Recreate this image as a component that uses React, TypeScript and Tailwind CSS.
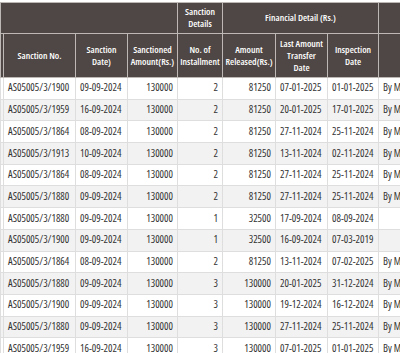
import React from "react";

type Row = {
  no: string;
  date: string;
  amount: string;
  inst: string;
  released: string;
  transfer: string;
  inspection: string;
  mode: string;
};

const rows: Row[] = [
  { no: "AS05005/3/1900", date: "09-09-2024", amount: "130000", inst: "2", released: "81250", transfer: "07-01-2025", inspection: "01-01-2025", mode: "By Mobile" },
  { no: "AS05005/3/1959", date: "16-09-2024", amount: "130000", inst: "2", released: "81250", transfer: "20-01-2025", inspection: "17-01-2025", mode: "By Mobile" },
  { no: "AS05005/3/1864", date: "08-09-2024", amount: "130000", inst: "2", released: "81250", transfer: "27-11-2024", inspection: "25-11-2024", mode: "By Mobile" },
  { no: "AS05005/3/1913", date: "10-09-2024", amount: "130000", inst: "2", released: "81250", transfer: "13-11-2024", inspection: "02-11-2024", mode: "By Mobile" },
  { no: "AS05005/3/1864", date: "08-09-2024", amount: "130000", inst: "2", released: "81250", transfer: "27-11-2024", inspection: "25-11-2024", mode: "By Mobile" },
  { no: "AS05005/3/1880", date: "09-09-2024", amount: "130000", inst: "2", released: "81250", transfer: "27-11-2024", inspection: "25-11-2024", mode: "By Mobile" },
  { no: "AS05005/3/1880", date: "09-09-2024", amount: "130000", inst: "1", released: "32500", transfer: "17-09-2024", inspection: "08-09-2024", mode: "" },
  { no: "AS05005/3/1900", date: "09-09-2024", amount: "130000", inst: "1", released: "32500", transfer: "16-09-2024", inspection: "07-03-2019", mode: "" },
  { no: "AS05005/3/1864", date: "08-09-2024", amount: "130000", inst: "2", released: "81250", transfer: "13-11-2024", inspection: "07-02-2025", mode: "By Mobile" },
  { no: "AS05005/3/1880", date: "09-09-2024", amount: "130000", inst: "3", released: "130000", transfer: "20-01-2025", inspection: "31-12-2024", mode: "By Mobile" },
  { no: "AS05005/3/1900", date: "09-09-2024", amount: "130000", inst: "3", released: "130000", transfer: "19-12-2024", inspection: "16-12-2024", mode: "By Mobile" },
  { no: "AS05005/3/1880", date: "09-09-2024", amount: "130000", inst: "3", released: "130000", transfer: "27-11-2024", inspection: "25-11-2024", mode: "By Mobile" },
  { no: "AS05005/3/1959", date: "16-09-2024", amount: "130000", inst: "3", released: "130000", transfer: "07-01-2025", inspection: "01-01-2025", mode: "By Mobile" },
];

const th = "border border-[#bdb8b6] bg-[#4f4745] text-white font-semibold text-center align-middle px-0 leading-[12px] text-[9.5px]";
const td = "border border-[#dedede] px-[4px] h-[21.7px] whitespace-nowrap overflow-hidden";

export default function App() {
  return (
    <div
      className="w-[400px] h-[353px] overflow-hidden bg-white pt-[2px] text-[#333] text-[10.5px] font-stretch-condensed"
      style={{ fontFamily: '"Open Sans", "Liberation Sans", sans-serif' }}
    >
      <table className="border-collapse table-fixed w-[460px] border-t border-[#d9d9d9]">
        <colgroup>
          <col className="w-[3px]" />
          <col className="w-[72px]" />
          <col className="w-[52px]" />
          <col className="w-[50px]" />
          <col className="w-[45px]" />
          <col className="w-[53px]" />
          <col className="w-[52px]" />
          <col className="w-[51px]" />
          <col className="w-[82px]" />
        </colgroup>
        <thead>
          <tr className="h-[31px]">
            <th colSpan={4} className={th}></th>
            <th className={th}>
              Sanction
              <br />
              Details
            </th>
            <th colSpan={3} className={th}>
              Financial Detail (Rs.)
            </th>
            <th className={th}></th>
          </tr>
          <tr className="h-[44px]">
            <th className={th}></th>
            <th className={th}>Sanction No.</th>
            <th className={th}>
              Sanction
              <br />
              Date)
            </th>
            <th className={th}>
              Sanctioned
              <br />
              Amount(Rs.)
            </th>
            <th className={th}>
              No. of
              <br />
              Installment
            </th>
            <th className={th}>
              Amount
              <br />
              Released(Rs.)
            </th>
            <th className={th}>
              Last Amount
              <br />
              Transfer
              <br />
              Date
            </th>
            <th className={th}>
              Inspection
              <br />
              Date
            </th>
            <th className={th}></th>
          </tr>
        </thead>
        <tbody>
          {rows.map((r, i) => (
            <tr key={i} className={i % 2 === 1 ? "bg-[#f2f2f2]" : "bg-white"}>
              <td className="border border-[#dedede] p-0"></td>
              <td className={td}>{r.no}</td>
              <td className={td}>{r.date}</td>
              <td className={td + " text-right"}>{r.amount}</td>
              <td className={td + " text-right"}>{r.inst}</td>
              <td className={td + " text-right"}>{r.released}</td>
              <td className={td}>{r.transfer}</td>
              <td className={td}>{r.inspection}</td>
              <td className={td}>{r.mode}</td>
            </tr>
          ))}
        </tbody>
      </table>
    </div>
  );
}
